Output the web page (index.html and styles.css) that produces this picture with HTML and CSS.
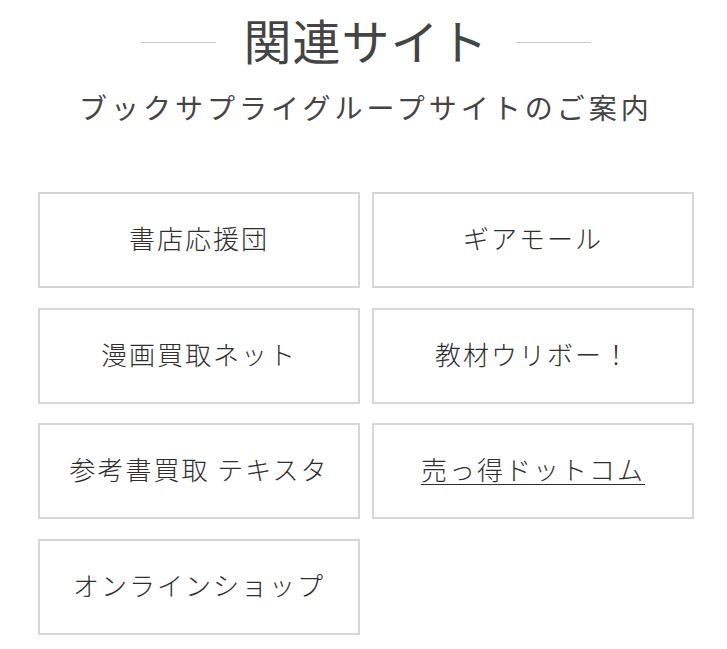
FILE: index.html
```html
<!DOCTYPE html>
<html lang="ja">
<head>
<meta charset="utf-8">
<link rel="stylesheet" href="styles.css">
</head>
<body>
<section class="related">
  <h2 class="title"><span class="line"></span><span class="title-text">関連サイト</span><span class="line"></span></h2>
  <p class="subtitle">ブックサプライグループサイトのご案内</p>
  <ul class="sites">
    <li class="site"><a href="#">書店応援団</a></li>
    <li class="site"><a href="#">ギアモール</a></li>
    <li class="site"><a href="#">漫画買取ネット</a></li>
    <li class="site"><a href="#">教材ウリボー！</a></li>
    <li class="site"><a href="#">参考書買取 テキスタ</a></li>
    <li class="site"><a href="#" class="hover">売っ得ドットコム</a></li>
    <li class="site"><a href="#">オンラインショップ</a></li>
  </ul>
</section>
</body>
</html>
```

FILE: styles.css
```css
html, body {
  margin: 0;
  padding: 0;
  background: #fff;
}
body {
  font-family: "Noto Sans CJK JP", "Noto Sans", sans-serif;
  color: #333;
}
.related {
  width: 656px;
  margin-left: 38px;
  padding-top: 9px;
}
.title {
  display: flex;
  align-items: center;
  justify-content: center;
  gap: 27px;
  margin: 0;
  font-size: 48px;
  font-weight: 400;
  line-height: 60px;
  color: #444;
  letter-spacing: 1px;
}
.line {
  width: 75px;
  height: 1px;
  background: #c8c8c8;
  margin-top: 6px;
}
.subtitle {
  margin: 20px 0 0;
  text-align: center;
  font-size: 28px;
  line-height: 36px;
  letter-spacing: 4px;
  color: #444;
}
.sites {
  list-style: none;
  margin: 67px 0 0;
  padding: 0;
  display: grid;
  grid-template-columns: 1fr 1fr;
  column-gap: 12px;
  row-gap: 19.67px;
}
.site {
  height: 96px;
  box-sizing: border-box;
  border: 2px solid #d6d6d6;
  padding-bottom: 4px;
  display: flex;
  align-items: center;
  justify-content: center;
}
.site a {
  color: #2e2e2e;
  text-decoration: none;
  font-size: 26px;
  font-weight: 300;
  letter-spacing: 2px;
  line-height: 34px;
}
.site a.hover {
  text-decoration: underline;
  text-underline-offset: 4px;
  text-decoration-thickness: 1px;
}
```
